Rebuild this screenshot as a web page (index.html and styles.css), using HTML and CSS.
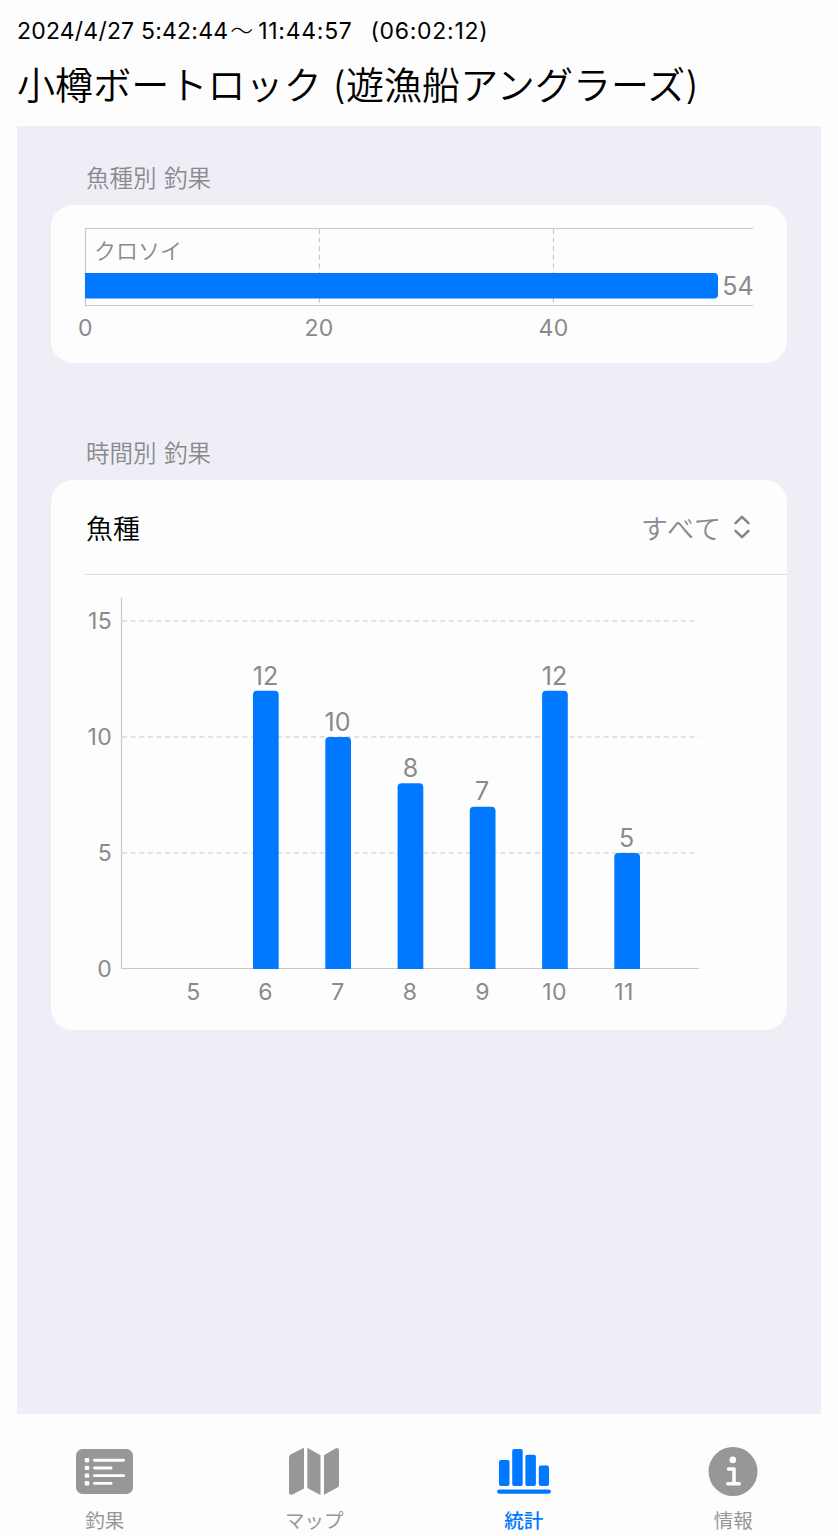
FILE: index.html
```html
<!DOCTYPE html>
<html lang="ja">
<head>
  <meta charset="UTF-8">
  <meta name="viewport" content="width=device-width, initial-scale=1.0">
  <title>統計</title>
  <link rel="stylesheet" href="styles.css">
</head>
<body>
  <header class="header">
    <div class="date"><span class="start">2024/4/27 5:42:44</span><span class="wave">～</span><span class="end">11:44:57</span><span class="duration">(06:02:12)</span></div>
    <h1 class="title">小樽ボートロック (遊漁船アングラーズ)</h1>
  </header>

  <main class="content">
    <h2 class="sectionTitle">魚種別 釣果</h2>
    <section class="card speciesCard">
      <svg class="chart" width="736" height="158" viewBox="0 0 736 158">
        <path class="grid" d="M268.5 24V100M502.5 24V100"/>
        <path class="axis" d="M702 23.5H34.5V100.5H702"/>
        <path class="bar" d="M34 68H663a4 4 0 0 1 4 4V89.5a4 4 0 0 1 -4 4H34z"/>
        <text class="name" x="43" y="54">クロソイ</text>
        <text class="value" x="687" y="90">54</text>
        <g class="tick">
          <text x="34.5" y="131">0</text>
          <text x="268" y="131">20</text>
          <text x="502.5" y="131">40</text>
        </g>
      </svg>
    </section>

    <h2 class="sectionTitle">時間別 釣果</h2>
    <section class="card">
      <div class="picker">
        <span class="pickerLabel">魚種</span>
        <span class="pickerValue">すべて</span>
        <svg class="chevron" width="18" height="26" viewBox="0 0 18 26">
          <path d="M2.5 9.2L9 2.8L15.5 9.2M2.5 16.8L9 23.2L15.5 16.8"/>
        </svg>
      </div>
      <svg class="chart" width="736" height="455" viewBox="0 0 736 455">
        <path class="grid" d="M71 46H648M71 162H648M71 278H648"/>
        <path class="axis" d="M70.5 23V393.5H648"/>
        <g class="bar">
          <path d="M202 394V119.7a4 4 0 0 1 4 -4h17.7a4 4 0 0 1 4 4V394z"/>
          <path d="M274.3 394V166a4 4 0 0 1 4 -4h17.7a4 4 0 0 1 4 4V394z"/>
          <path d="M346.6 394V212.3a4 4 0 0 1 4 -4h17.7a4 4 0 0 1 4 4V394z"/>
          <path d="M418.8 394V235.7a4 4 0 0 1 4 -4h17.7a4 4 0 0 1 4 4V394z"/>
          <path d="M491.1 394V119.7a4 4 0 0 1 4 -4h17.7a4 4 0 0 1 4 4V394z"/>
          <path d="M563.3 394V282a4 4 0 0 1 4 -4h17.7a4 4 0 0 1 4 4V394z"/>
        </g>
        <g class="value">
          <text x="214.5" y="110">12</text>
          <text x="286.5" y="156">10</text>
          <text x="359.5" y="202">8</text>
          <text x="431" y="225">7</text>
          <text x="503.5" y="110">12</text>
          <text x="575.5" y="272">5</text>
        </g>
        <g class="tick tickY">
          <text x="61" y="54">15</text>
          <text x="61" y="170">10</text>
          <text x="61" y="286">5</text>
          <text x="61" y="402">0</text>
        </g>
        <g class="tick">
          <text x="142.5" y="425">5</text>
          <text x="214.5" y="425">6</text>
          <text x="287" y="425">7</text>
          <text x="359" y="425">8</text>
          <text x="431.5" y="425">9</text>
          <text x="503.5" y="425">10</text>
          <text x="573" y="425">11</text>
        </g>
      </svg>
    </section>
  </main>

  <nav class="tabs">
    <div class="tab">
      <svg class="icon" width="58" height="50" viewBox="0 0 58 50">
        <rect x="0" y="2" width="57" height="45" rx="6.5"/>
        <g class="cut">
          <rect x="8.7" y="11" width="4.6" height="4.4" rx="1.3"/>
          <rect x="8.7" y="18.7" width="4.6" height="4.4" rx="1.3"/>
          <rect x="8.7" y="26.4" width="4.6" height="4.4" rx="1.3"/>
          <rect x="8.7" y="34.1" width="4.6" height="4.4" rx="1.3"/>
          <rect x="17" y="11.8" width="32" height="2.9" rx="1.4"/>
          <rect x="17" y="19.5" width="19.5" height="2.9" rx="1.4"/>
          <rect x="17" y="27.2" width="32" height="2.9" rx="1.4"/>
          <rect x="17" y="34.9" width="19.5" height="2.9" rx="1.4"/>
        </g>
      </svg>
      <span>釣果</span>
    </div>
    <div class="tab">
      <svg class="icon" width="50" height="50" viewBox="0 0 50 50">
        <path d="M0 10.5Q0 8.5 2 7.3L15 0.8V41.5L4 47.2Q0 48.8 0 45.5z"/>
        <path d="M18.3 0.8L31.5 8.3V48L18.3 41z"/>
        <path d="M35 8.3L46 1.7Q50 -0.2 50 3.8V38Q50 39.6 48.5 40.4L35 47.8z"/>
      </svg>
      <span>マップ</span>
    </div>
    <div class="tab tabSelected">
      <svg class="icon" width="54" height="50" viewBox="0 0 54 50">
        <rect x="2" y="13" width="10.5" height="26" rx="2"/>
        <rect x="15.2" y="2" width="10.5" height="37" rx="2"/>
        <rect x="28.4" y="7.7" width="10.5" height="31.3" rx="2"/>
        <rect x="41.8" y="18.5" width="10.2" height="20.5" rx="2"/>
        <rect x="0" y="42.5" width="54" height="4.2" rx="2.1"/>
      </svg>
      <span>統計</span>
    </div>
    <div class="tab">
      <svg class="icon" width="50" height="50" viewBox="0 0 50 50">
        <circle cx="25" cy="24.5" r="24.5"/>
        <circle class="cut" cx="24.8" cy="12.9" r="3.3"/>
        <path class="stem" d="M20.5 22H26V36.5M19.8 36.7H31.2"/>
      </svg>
      <span>情報</span>
    </div>
  </nav>
</body>
</html>
```
FILE: styles.css
```css
* {
  box-sizing: border-box;
}
body {
  margin: 0;
  height: 1536px;
  display: flex;
  flex-direction: column;
  background-color: #fdfdfd;
  font-family: Inter, "Noto Sans CJK JP", sans-serif;
  font-weight: 350;
  color: #000;
  overflow: hidden;
}

/* ヘッダー */
.header {
  height: 126px;
  padding: 16px 17px 0;
}
.date {
  display: flex;
  height: 30px;
  line-height: 30px;
  font-size: 23px;
  font-weight: 400;
  white-space: nowrap;
}
.start {
  letter-spacing: 0.2px;
}
.wave {
  margin: 0 5px 0 2px;
  font-weight: 300;
}
.end, .duration {
  letter-spacing: 0.7px;
}
.duration {
  margin-left: 18px;
}
.title {
  margin: 11px 0 0;
  font-size: 38px;
  font-weight: 350;
  line-height: 56px;
  letter-spacing: 0.1px;
  white-space: nowrap;
}

/* 統計 */
.content {
  flex: 1;
  margin: 0 17px;
  padding: 0 34px;
  background-color: #efeef6;
}
.sectionTitle {
  margin: 0;
  padding: 36px 35px 0;
  height: 79px;
  font-size: 23.5px;
  font-weight: 350;
  line-height: 34px;
  word-spacing: 1px;
  color: #8a8a8e;
}
.card {
  border-radius: 22px;
  background-color: #fdfdfd;
  overflow: hidden;
}
.speciesCard {
  margin-bottom: 38px;
}
.picker {
  display: flex;
  align-items: center;
  height: 95px;
  margin-left: 34px;
  padding-right: 36px;
  border-bottom: 1px solid #dededf;
  font-size: 27px;
}
.pickerLabel {
  margin-left: 1px;
}
.pickerValue {
  margin-left: auto;
  letter-spacing: 1px;
  color: #8a8a8e;
}
.chevron {
  margin-left: 11px;
  fill: none;
  stroke: #858587;
  stroke-width: 2.5;
  stroke-linecap: round;
  stroke-linejoin: round;
}

/* グラフ */
.chart {
  display: block;
}
.axis {
  fill: none;
  stroke: #c8c8ca;
  stroke-width: 1.2;
}
.grid {
  fill: none;
  stroke: #c8c8ca;
  stroke-width: 1.2;
  stroke-dasharray: 5 3.6;
}
.bar {
  fill: #0078ff;
}
.name {
  fill: #8a8a8c;
  font-size: 22px;
}
.value {
  fill: #8a8a8c;
  font-size: 25px;
  font-weight: 400;
  text-anchor: middle;
}
.tick {
  fill: #8a8a8c;
  font-size: 23px;
  font-weight: 400;
  letter-spacing: 0.3px;
  text-anchor: middle;
}
.tickY {
  text-anchor: end;
}

/* タブ */
.tabs {
  display: flex;
  height: 122px;
  padding-top: 33px;
}
.tab {
  flex: 1;
  display: flex;
  flex-direction: column;
  align-items: center;
  font-size: 19.5px;
  font-weight: 400;
  line-height: 28px;
  color: #979797;
}
.tab span {
  margin-top: 10px;
}
.tabSelected {
  color: #0078ff;
  font-weight: 500;
}
.icon {
  fill: currentColor;
}
.cut {
  fill: #fdfdfd;
}
.stem {
  fill: none;
  stroke: #fdfdfd;
  stroke-width: 3.6;
  stroke-linecap: round;
  stroke-linejoin: round;
}
```
